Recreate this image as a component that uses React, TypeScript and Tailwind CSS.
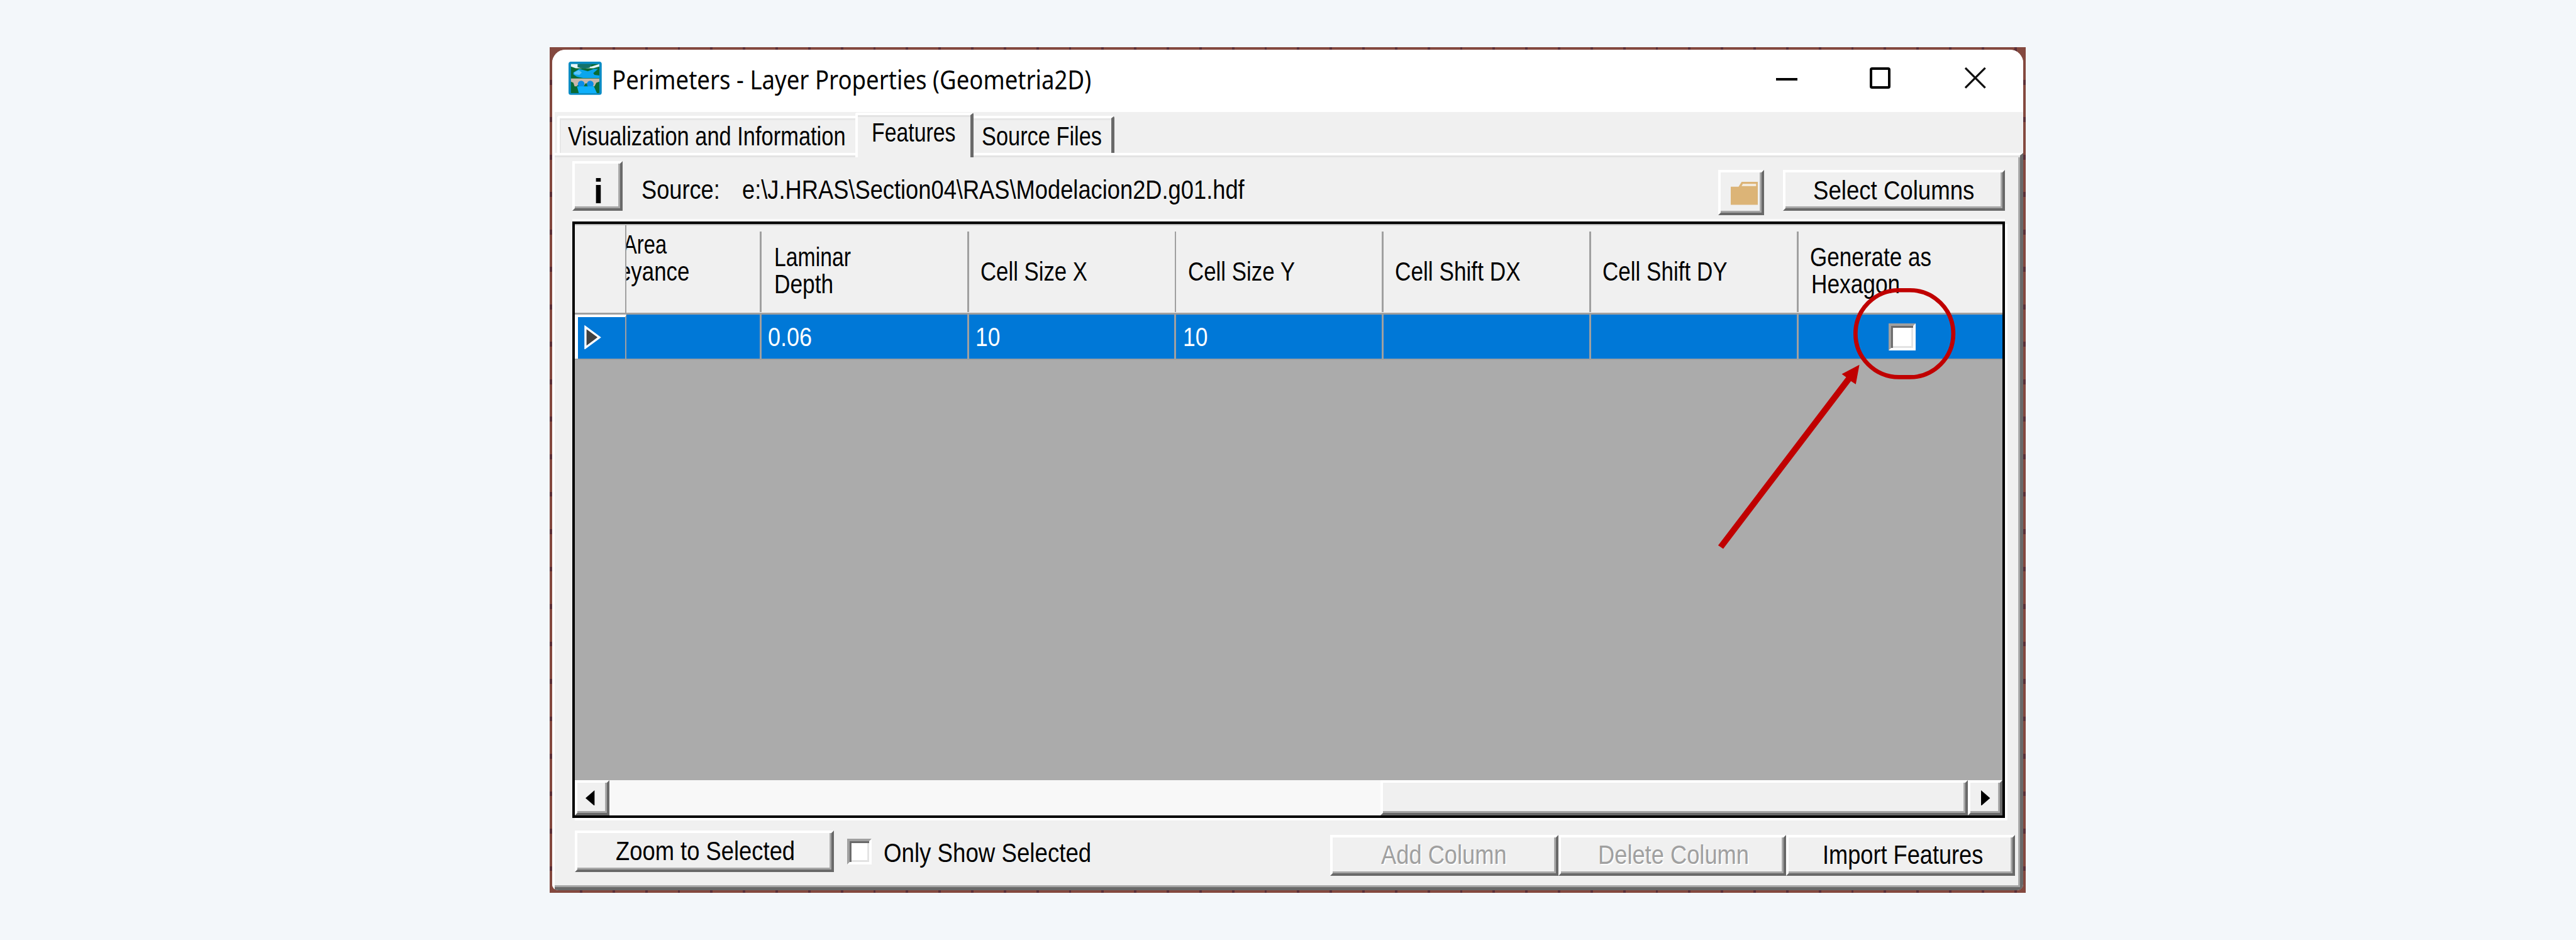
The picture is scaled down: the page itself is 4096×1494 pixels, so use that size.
import { useLayoutEffect, useRef, useState } from 'react';
import type { ReactNode } from 'react';

type TextProps = { w: number; children: ReactNode; className?: string };

/* A single line of text, condensed or widened so its ink spans w pixels. */
function Fit({ w, children, className = '' }: TextProps) {
  const outer = useRef<HTMLSpanElement>(null);
  const inner = useRef<HTMLSpanElement>(null);
  const [scale, setScale] = useState(1);
  useLayoutEffect(() => {
    if (!outer.current || !inner.current) return;
    inner.current.style.transform = 'none';
    const ratio =
      ((outer.current.getBoundingClientRect().width / inner.current.getBoundingClientRect().width) *
        (w + 2)) /
      w;
    inner.current.style.transform = `scaleX(${ratio})`;
    setScale(ratio);
  }, [w]);
  return (
    <span ref={outer} className={`block h-[44px] shrink-0 text-[44px] leading-[44px] ${className}`} style={{ width: w }}>
      <span
        ref={inner}
        className="-ml-[1px] inline-block origin-left pt-[1px] align-top whitespace-pre"
        style={{ transform: `scaleX(${scale})` }}
      >
        {children}
      </span>
    </span>
  );
}

const bevel =
  'flex shrink-0 justify-center border-[4.2px] border-t-white border-l-white border-r-[#696969] border-b-[#696969] bg-[#f0f0f0] shadow-[inset_-3px_-3px_0_#a6a6a6]';

const sunken =
  'shrink-0 border-[4.2px] border-t-[#a0a0a0] border-l-[#a0a0a0] border-r-white border-b-white bg-white shadow-[inset_3px_3px_0_#696969,inset_-3px_-3px_0_#e3e3e3]';

function AppIcon() {
  return (
    <svg className="mt-[20px] ml-[27px] h-[55px] w-[55px] shrink-0" viewBox="0 0 55 55">
      <rect width="55" height="55" rx="4" fill="#0b8cc4" />
      <rect x="4" y="4" width="47" height="48" fill="#0a6b34" />
      <path d="M4 4h14l6 3 14 1 13-4v4l-10 3H12L4 8z" fill="#e6f4f8" />
      <path d="M15 4h24l-4 6-10 2-10-3z" fill="#13726a" />
      <path d="M8 18l10-6 14 4 10-4 7 0-8 7 2 3 8 1v4H24l-10-2-6-4z" fill="#0ba6ee" />
      <path d="M9 18l8-4 5 4-4 4-8-1z" fill="#5cc6fa" />
      <path d="M4 28h47v5l-5 2-3 6h-4l-3-5h-8l-3 5h-3l-3-5-6 5h-3l-2-6-4-2z" fill="#c9b8ac" />
      <circle cx="21" cy="37" r="5.500" fill="#0b8ce6" />
      <circle cx="36" cy="37" r="5.500" fill="#0b8ce6" />
      <path d="M14 41h28l5 11H17z" fill="#0fb0fb" />
    </svg>
  );
}

function TitleBar() {
  return (
    <div className="flex h-[103px] shrink-0 items-start bg-white">
      <AppIcon />
      <Fit w={792} className="mt-[26px] ml-[18px] font-['Noto_Sans',sans-serif] text-[42px]">
        Perimeters - Layer Properties (Geometria2D)
      </Fit>
      <div className="mt-[47px] ml-[1135px] h-[4px] w-[35px] bg-black" />
      <div className="mt-[30px] ml-[120px] h-[35px] w-[35px] rounded-[4px] border-[4.2px] border-black" />
      <svg className="mt-[30px] ml-[123px] h-[35px] w-[35px]" viewBox="0 0 35 35">
        <path d="M1 1L34 34M34 1L1 34" stroke="#111" strokeWidth="3.4" />
      </svg>
    </div>
  );
}

function Tabs() {
  return (
    <div className="flex h-[68px] shrink-0 items-end">
      <div className="ml-[4px] h-[61px] w-[494px] rounded-tl-[4px] border-t-[4.2px] border-l-[4.2px] border-white pt-[7px] pl-[14px] shadow-[inset_2px_3px_0_#e6e6e6]">
        <Fit w={458}>Visualization and Information</Fit>
      </div>
      <div className="relative z-10 -mb-[7px] h-[73px] w-[195px] rounded-t-[3px] border-t-[4.2px] border-r-[5.3px] border-l-[4.2px] border-t-white border-r-[#696969] border-l-white bg-[#f0f0f0] pt-[6px] pl-[24px] shadow-[inset_0_3px_0_#e3e3e3]">
        <Fit w={137}>Features</Fit>
      </div>
      <div className="h-[61px] w-[234px] rounded-tr-[4px] border-t-[4.2px] border-r-[5.3px] border-t-white border-r-[#696969] pt-[7px] pl-[15px] shadow-[inset_0_3px_0_#e6e6e6]">
        <Fit w={197}>Source Files</Fit>
      </div>
    </div>
  );
}

function Toolbar() {
  return (
    <div className="flex h-[107px] shrink-0 items-start">
      <div className={`${bevel} mt-[7px] ml-[29px] h-[82px] w-[83px]`}>
        <span className="mt-[17px] ml-[3px] text-[58px] leading-[58px] font-bold">i</span>
      </div>
      <Fit w={128} className="mt-[32px] ml-[32px]">Source:</Fit>
      <Fit w={830} className="mt-[32px] ml-[39px]">{'e:\\J.HRAS\\Section04\\RAS\\Modelacion2D.g01.hdf'}</Fit>
      <div className={`${bevel} mt-[21px] ml-[786px] h-[75px] w-[76px]`}>
        <svg className="mt-[16px] ml-[10px] h-[38px] w-[45px]" viewBox="0 0 45 38">
          <path d="M0 8H13L18 0H45V38H0Z" fill="#dcb477" />
          <path d="M18 7L20 3.500H42V7Z" fill="#f5efe4" />
        </svg>
      </div>
      <div className={`${bevel} mt-[21px] ml-[31px] h-[68px] w-[368px] pt-[7px]`}>
        <Fit w={265}>Select Columns</Fit>
      </div>
    </div>
  );
}

type Column = { lines: [string, number][]; value?: [string, number]; pad: string };

const columns: Column[] = [
  { lines: [['Laminar', 125], ['Depth', 96]], value: ['0.06', 71], pad: 'pl-[22px] pt-[32px]' },
  { lines: [['Cell Size X', 175]], value: ['10', 39], pad: 'pl-[20px] pt-[56px]' },
  { lines: [['Cell Size Y', 175]], value: ['10', 39], pad: 'pl-[20px] pt-[56px]' },
  { lines: [['Cell Shift DX', 206]], pad: 'pl-[20px] pt-[56px]' },
  { lines: [['Cell Shift DY', 205]], pad: 'pl-[20px] pt-[56px]' },
];

function Divider() {
  return <div className="mt-[10px] h-[133px] w-[3px] shrink-0 bg-[#a0a0a0]" />;
}

function HeaderRow() {
  return (
    <div className="flex h-[150px] shrink-0 border-t-[2.1px] border-b-[3.2px] border-t-[#b8b8b8] border-b-[#a0a0a0] bg-[#f0f0f0]">
      <div className="w-[85px] shrink-0 border-r-[2.1px] border-[#a0a0a0]" />
      <div className="flex w-[224px] shrink-0 overflow-hidden">
        <div className="flex-1 pt-[9px]">
          <Fit w={70} className="-ml-[4px]">Area</Fit>
          <Fit w={115} className="mt-[1px] -ml-[11px]">eyance</Fit>
        </div>
        <Divider />
      </div>
      {columns.map((c) => (
        <div key={c.lines[0][0]} className="flex w-[343.6px] shrink-0">
          <div className={`-mt-[2px] flex flex-1 flex-col gap-[1px] ${c.pad}`}>
            {c.lines.map(([text, w]) => (
              <Fit key={text} w={w}>{text}</Fit>
            ))}
          </div>
          <Divider />
        </div>
      ))}
      <div className="-mt-[2px] flex flex-1 flex-col gap-[1px] pt-[32px] pl-[20px]">
        <Fit w={199}>Generate as</Fit>
        <Fit w={145} className="ml-[2px]">Hexagon</Fit>
      </div>
    </div>
  );
}

function DataRow() {
  return (
    <div className="flex h-[75px] shrink-0 border-b-[2.1px] border-[#a0a0a0] bg-[#0078d7] text-white">
      <div className="w-[85px] shrink-0 border-t-[4.2px] border-r-[2.1px] border-l-[5.3px] border-t-white border-r-[#a0a0a0] border-l-white">
        <svg className="mt-[13px] ml-[10px] h-[40px] w-[28px]" viewBox="0 0 28 40">
          <path d="M2 3V37L25 20Z" fill="#404040" stroke="#fff" strokeWidth="3.5" />
        </svg>
      </div>
      <div className="w-[224px] shrink-0 border-r-[3.2px] border-[#a0a0a0]" />
      {columns.map((c) => (
        <div key={c.lines[0][0]} className="w-[343.6px] shrink-0 border-r-[3.2px] border-[#a0a0a0] pt-[14px] pl-[12px]">
          {c.value && <Fit w={c.value[1]}>{c.value[0]}</Fit>}
        </div>
      ))}
      <div className="flex-1 pt-[14px] pl-[149px]">
        <div className={`${sunken} h-[45px] w-[45px]`} />
      </div>
    </div>
  );
}

function ScrollBar() {
  return (
    <div className="flex h-[58px] shrink-0">
      <div className={`${bevel} w-[57px] items-center`}>
        <svg className="mr-[6px] h-[26px] w-[15px]" viewBox="0 0 15 26">
          <path d="M15 0V26L0 13Z" />
        </svg>
      </div>
      <div className="w-[1277px] shrink-0 bg-[#f8f8f8]" />
      <div className={`${bevel} w-[973px]`} />
      <div className={`${bevel} w-[58px] items-center`}>
        <svg className="ml-[2px] h-[26px] w-[15px]" viewBox="0 0 15 26">
          <path d="M0 0V26L15 13Z" />
        </svg>
      </div>
    </div>
  );
}

function Grid() {
  return (
    <div className="ml-[29px] flex h-[987px] w-[2373px] shrink-0 flex-col border-[4.2px] border-black bg-[#ababab] shadow-[0_-4px_0_#fbfbfb,4px_4px_0_#fff]">
      <HeaderRow />
      <DataRow />
      <div className="flex-1" />
      <ScrollBar />
    </div>
  );
}

function Footer() {
  const disabled = 'text-[#a0a0a0] [text-shadow:2px_2px_0_#fff]';
  return (
    <div className="flex flex-1 items-start">
      <div className={`${bevel} mt-[21px] ml-[33px] h-[69px] w-[429px] pt-[7px] pl-[3px]`}>
        <Fit w={295}>Zoom to Selected</Fit>
      </div>
      <div className={`${sunken} mt-[35px] ml-[22px] h-[42px] w-[41px]`} />
      <Fit w={342} className="mt-[36px] ml-[21px]">Only Show Selected</Fit>
      <div className={`${bevel} mt-[28px] ml-[396px] h-[68px] w-[378px] pt-[7px]`}>
        <Fit w={206} className={disabled}>Add Column</Fit>
      </div>
      <div className={`${bevel} mt-[28px] h-[68px] w-[378px] pt-[7px] pl-[3px]`}>
        <Fit w={248} className={disabled}>Delete Column</Fit>
      </div>
      <div className={`${bevel} mt-[28px] h-[68px] w-[379px] pt-[7px] pl-[6px]`}>
        <Fit w={264}>Import Features</Fit>
      </div>
    </div>
  );
}

/* Red marker around the hexagon check box, with the arrow pointing at it. */
function Annotation() {
  return (
    <svg className="pointer-events-none absolute top-0 left-0 z-20 h-[1556px] w-[4267px]" viewBox="0 0 4267 1556">
      <rect x="3073.500" y="480.500" width="162" height="144" rx="72" fill="none" stroke="#c00000" strokeWidth="7" />
      <path d="M3080 604L3050.800 619.300L3058 624.500L2846 903L2854.400 908.600L3066 631L3074 636.300Z" fill="#c00000" />
    </svg>
  );
}

export default function App() {
  return (
    <div className="h-[1494px] w-[4096px] overflow-hidden bg-[#f3f7fa]">
      <div className="relative h-[1556px] w-[4267px] bg-[#f3f7fa] pt-[78px] pl-[911px] font-['Liberation_Sans',Arial,sans-serif] text-black [zoom:0.95993]">
        <div className="h-[1400px] w-[2444px] bg-[#84493f] bg-[repeating-linear-gradient(90deg,transparent_0_50px,#5c3038_50px_54px),repeating-linear-gradient(180deg,transparent_0_54px,#5c3038_54px_62px)] p-[4px]">
          <div className="flex h-[1392px] w-[2436px] flex-col overflow-hidden rounded-t-[22px] rounded-b-[10px] bg-[#f0f0f0]">
            <TitleBar />
            <div className="flex flex-1 flex-col border-l-[4.2px] border-white">
              <Tabs />
              <div className="flex flex-1 flex-col border-t-[4.2px] border-r-[5.3px] border-b-[5.3px] border-t-white border-r-[#696969] border-b-[#696969] pt-[3px] shadow-[inset_0_3px_0_#e3e3e3,inset_-3px_-3px_0_#a6a6a6]">
                <Toolbar />
                <Grid />
                <Footer />
              </div>
            </div>
          </div>
        </div>
        <Annotation />
      </div>
    </div>
  );
}
